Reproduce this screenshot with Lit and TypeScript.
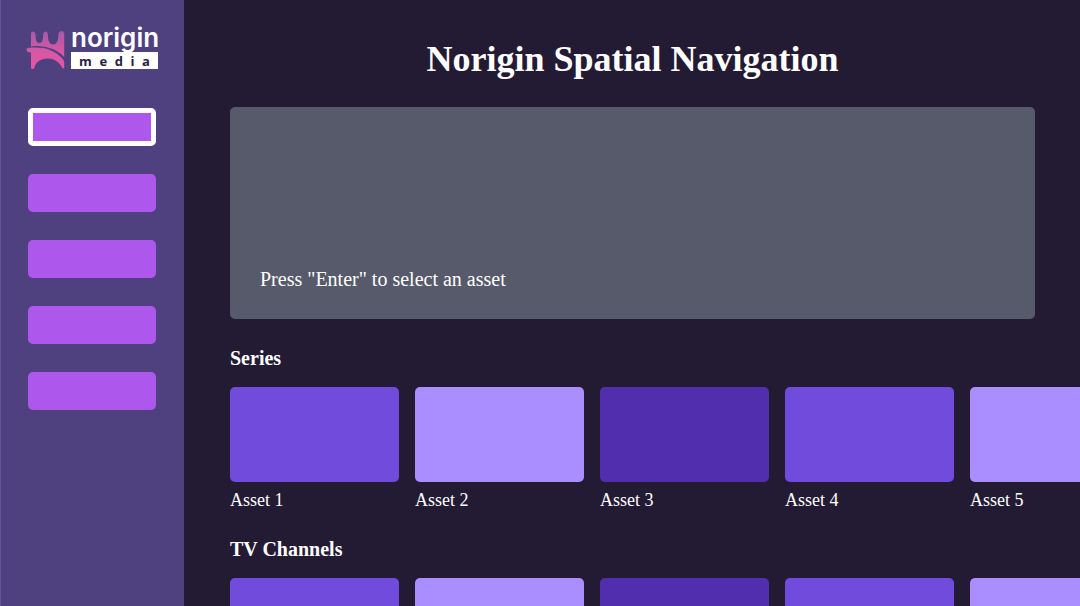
import { LitElement, html, css } from "lit";
import { customElement, property, state } from "lit/decorators.js";
import { classMap } from "lit/directives/class-map.js";

@customElement("brand-logo")
class BrandLogo extends LitElement {
  static styles = css`
    :host {
      display: flex;
      gap: 4px;
      padding-left: 26px;
      color: #fff;
    }
    .mark {
      flex: none;
      width: 41px;
      height: 42px;
      margin-top: 5px;
    }
    .name {
      display: block;
      font: 600 26px/28px Inter, sans-serif;
    }
    .tag {
      display: flex;
      justify-content: space-between;
      box-sizing: border-box;
      width: 87px;
      height: 17px;
      padding: 0 8px;
      background: #fff;
      color: #292044;
      font: 700 13px/18px "Open Sans", sans-serif;
    }
  `;

  render() {
    return html`
      <svg class="mark" viewBox="0 0 41 42" aria-hidden="true">
        <defs>
          <linearGradient id="fade" gradientUnits="userSpaceOnUse" x1="0" y1="0" x2="0" y2="42">
            <stop offset="0" stop-color="#9f5aa8" />
            <stop offset="0.5" stop-color="#d557a6" />
            <stop offset="1" stop-color="#e756a2" />
          </linearGradient>
        </defs>
        <path
          fill="url(#fade)"
          d="M5 4.500Q5 2.500 7 2.500Q9.200 2.500 9.500 5C9.800 11 10 14 13.500 14C16.800 14 17 10 17.200 5Q17.500 2.500 19.500 2.500Q21.500 2.500 21.800 5C22 11 23 15.500 27.500 15.500C31.500 15.500 32.300 10 32.500 4.500Q32.800 2 35.500 2Q38 2 38.200 4.500V28C33 22.500 27 19.500 20 18C14 16.800 9 17 5 17.500Z"
        />
        <path
          fill="url(#fade)"
          d="M2 19C10 18 18 18.500 24 21C31 24 36 28 38.200 32.500V38Q38.200 40 36.500 39.300C34 34 29 29.500 22 29.500C14 29.500 10 33 8.500 38.500Q8 40 6.500 40Q5 40 5 38.500V23.500Q1 23.500 0.500 21Q0.300 19.200 2 19Z"
        />
      </svg>
      <div>
        <span class="name">norigin</span>
        <span class="tag" role="img" aria-label="media">
          ${[..."media"].map((letter) => html`<span>${letter}</span>`)}
        </span>
      </div>
    `;
  }
}

@customElement("side-menu")
class SideMenu extends LitElement {
  @state() private focused = 0;

  static styles = css`
    :host {
      display: block;
      flex: none;
      box-sizing: border-box;
      width: 184px;
      padding-top: 24px;
      background: #4f417f;
      border-left: 1px solid #62549a;
    }
    brand-logo {
      margin-left: -1px;
    }
    .items {
      display: flex;
      flex-direction: column;
      gap: 28px;
      padding: 37px 28px 0 27px;
    }
    .item {
      height: 38px;
      padding: 0;
      border: 0 solid #fff;
      border-radius: 5px;
      background: #ae57ed;
      outline: none;
      cursor: pointer;
    }
    .focused {
      border-width: 5px;
    }
  `;

  render() {
    return html`
      <brand-logo></brand-logo>
      <nav class="items" aria-label="Main">
        ${[0, 1, 2, 3, 4].map(
          (index) => html`<button
            class=${classMap({ item: true, focused: index === this.focused })}
            aria-label="Menu item ${index + 1}"
            @focus=${() => (this.focused = index)}
          ></button>`,
        )}
      </nav>
    `;
  }
}

const TILE_TONES = ["violet", "lilac", "indigo"];

@customElement("content-row")
class ContentRow extends LitElement {
  @property() heading = "";

  static styles = css`
    :host {
      display: block;
      color: #fff;
    }
    .heading {
      margin: 0 0 17px;
      font-size: 20px;
      line-height: 24px;
      font-weight: 700;
    }
    .track {
      display: flex;
      gap: 16px;
      overflow: hidden;
    }
    .asset {
      flex: none;
      width: 169px;
      padding: 0;
      border: 0;
      background: none;
      color: inherit;
      font: inherit;
      font-size: 18px;
      line-height: 24px;
      text-align: left;
      cursor: pointer;
    }
    .tile {
      display: block;
      height: 95px;
      margin-bottom: 6px;
      border-radius: 5px;
    }
    .violet {
      background: #714bdc;
    }
    .lilac {
      background: #aa8dff;
    }
    .indigo {
      background: #512eae;
    }
  `;

  private select(title: string) {
    this.dispatchEvent(new CustomEvent("asset-select", { detail: title, bubbles: true, composed: true }));
  }

  render() {
    const titles = [1, 2, 3, 4, 5].map((n) => `Asset ${n}`);
    return html`
      <h2 class="heading">${this.heading}</h2>
      <div class="track">
        ${titles.map(
          (title, i) => html`<button class="asset" @click=${() => this.select(title)}>
            <span class="tile ${TILE_TONES[i % TILE_TONES.length]}"></span>${title}
          </button>`,
        )}
      </div>
    `;
  }
}

@customElement("app-root")
class AppRoot extends LitElement {
  @state() private selected = "";

  static styles = css`
    :host {
      display: flex;
      height: 100vh;
      overflow: hidden;
      background: #231b34;
      color: #fff;
      font-family: "Liberation Serif", "Times New Roman", serif;
    }
    .content {
      flex: 1;
      min-width: 0;
      overflow-y: auto;
      scrollbar-width: none;
      padding: 36px 0 0 46px;
    }
    .title {
      margin: 0 45px 25px 0;
      font-size: 36px;
      line-height: 46px;
      font-weight: 700;
      text-align: center;
    }
    .hero {
      display: flex;
      align-items: flex-end;
      box-sizing: border-box;
      min-height: 212px;
      margin-right: 45px;
      padding: 28px 30px;
      border-radius: 5px;
      background: #575a6a;
      font-size: 20px;
      line-height: 24px;
    }
    .message {
      margin: 0;
    }
    .rows {
      display: flex;
      flex-direction: column;
      gap: 25px;
      padding-top: 27px;
    }
  `;

  render() {
    return html`
      <side-menu></side-menu>
      <main class="content">
        <h1 class="title">Norigin Spatial Navigation</h1>
        <section class="hero">
          <p class="message">${this.selected || 'Press "Enter" to select an asset'}</p>
        </section>
        <div class="rows" @asset-select=${(e: CustomEvent) => (this.selected = e.detail)}>
          <content-row heading="Series"></content-row>
          <content-row heading="TV Channels"></content-row>
        </div>
      </main>
    `;
  }
}
